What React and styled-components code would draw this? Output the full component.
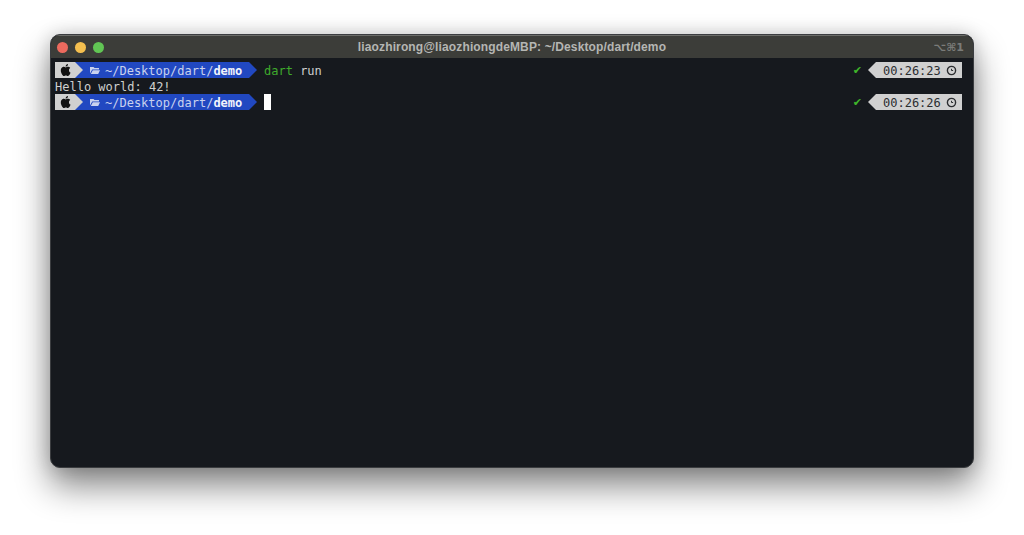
import styled, { createGlobalStyle } from "styled-components";

const Global = createGlobalStyle`
  html, body {
    margin: 0;
    background: #fff;
    overflow: hidden;
  }
`;

const Page = styled.div`
  width: 1024px;
  height: 535px;
  padding: 34px 50px 0;
  box-sizing: border-box;
`;

const Window = styled.div`
  width: 924px;
  height: 434px;
  border-radius: 10px;
  border: 1px solid #3b3d40;
  box-sizing: border-box;
  background: #16191e;
  box-shadow: 0 18px 34px rgba(0, 0, 0, 0.48), 0 0 18px rgba(0, 0, 0, 0.16);
  overflow: hidden;
  display: flex;
  flex-direction: column;
`;

const TitleBar = styled.div`
  height: 23px;
  flex: none;
  background: #3c3d39;
  border-top: 1px solid #6b6c68;
  box-sizing: border-box;
  display: grid;
  grid-template-columns: 100px 1fr 100px;
  align-items: center;
  padding: 0 9px 0 6px;
`;

const Lights = styled.div`
  display: flex;
  gap: 7px;
`;

const Light = styled.span`
  width: 11px;
  height: 11px;
  border-radius: 50%;
  background: ${(p) => p.$color};
`;

const Title = styled.div`
  text-align: center;
  padding-left: 3px;
  font: bold 12px "Liberation Sans", Arial, sans-serif;
  letter-spacing: 0.13px;
  color: #b5b6b3;
`;

const Shortcut = styled.div`
  text-align: right;
  font: bold 11px "DejaVu Sans", sans-serif;
  color: #7a7b78;
  white-space: nowrap;
`;

const Terminal = styled.div`
  padding: 4px 11px 0 4px;
  font: 12px/16px "DejaVu Sans Mono", monospace;
  color: #cfd0cf;
`;

const Row = styled.div`
  height: 16px;
  display: flex;
  align-items: center;
  white-space: pre;
`;

const TextLine = styled.div`
  height: 16px;
  padding-top: 1px;
  box-sizing: border-box;
  white-space: pre;
`;

const AppleSeg = styled.div`
  width: 28px;
  height: 16px;
  margin-right: -8px;
  background: #d0d0d0;
  padding-left: 4px;
  box-sizing: border-box;
  display: flex;
  align-items: center;
  clip-path: polygon(0 0, 20px 0, 28px 50%, 20px 100%, 0 100%);
  position: relative;
  z-index: 1;
`;

const PathSeg = styled.div`
  width: 182px;
  height: 16px;
  flex: none;
  background: #2148c1;
  color: #c9d2ee;
  padding: 1px 0 0 15px;
  box-sizing: border-box;
  display: flex;
  align-items: center;
  clip-path: polygon(0 0, 174px 0, 182px 50%, 174px 100%, 0 100%);
  b {
    color: #f2f4fb;
    font-weight: bold;
  }
`;

const FolderIcon = styled.svg`
  width: 10px;
  height: 9px;
  margin-right: 5px;
  flex: none;
`;

const Command = styled.span`
  margin-left: 7px;
  padding-top: 1px;
`;

const Green = styled.span`
  color: #3fa92c;
`;

const Cursor = styled.span`
  width: 7px;
  height: 16px;
  margin-left: 7px;
  background: #fff;
`;

const Status = styled.div`
  margin-left: auto;
  display: flex;
  align-items: center;
`;

const Check = styled.span`
  color: #3fb52a;
  font: bold 11px "DejaVu Sans", sans-serif;
  padding-top: 1px;
  margin-right: 6px;
`;

const TimeSeg = styled.div`
  width: 94px;
  height: 16px;
  background: #d0d0d0;
  color: #2b2d30;
  box-sizing: border-box;
  padding: 1px 0 0 15px;
  display: flex;
  align-items: center;
  gap: 5px;
  clip-path: polygon(8px 0, 100% 0, 100% 100%, 8px 100%, 0 50%);
`;

const AppleLogo = () => (
  <svg width="14" height="14" viewBox="0 0 24 24" fill="#111">
    <path d="M17.05 12.54c-.03-2.6 2.12-3.85 2.22-3.91-1.21-1.77-3.09-2.01-3.76-2.04-1.6-.16-3.12.94-3.93.94-.81 0-2.06-.92-3.39-.89-1.74.03-3.35 1.01-4.25 2.57-1.81 3.14-.46 7.8 1.3 10.35.86 1.25 1.89 2.65 3.24 2.6 1.3-.05 1.79-.84 3.36-.84s2.01.84 3.39.81c1.4-.02 2.28-1.27 3.14-2.53.99-1.45 1.4-2.85 1.42-2.93-.03-.01-2.72-1.04-2.74-4.13zM14.47 4.9c.72-.87 1.2-2.08 1.07-3.28-1.03.04-2.28.69-3.02 1.55-.66.77-1.24 2-1.09 3.18 1.15.09 2.33-.58 3.04-1.45z" />
  </svg>
);

const Clock = () => (
  <svg width="11" height="11" viewBox="0 0 11 11" fill="none" stroke="#2b2d30">
    <circle cx="5.5" cy="5.5" r="4.1" strokeWidth="1.4" />
    <path d="M5.5 3.8v1.7h1.6" strokeWidth="1" />
  </svg>
);

const Prompt = () => (
  <>
    <AppleSeg>
      <AppleLogo />
    </AppleSeg>
    <PathSeg>
      <FolderIcon viewBox="0 0 10 9" fill="#c9d2ee">
        <path d="M0 1h3.5l1 1H9v1.5H2.2L0 7.5zM2.8 4.3H10L8.2 8H.8z" />
      </FolderIcon>
      ~/Desktop/dart/<b>demo</b>
    </PathSeg>
  </>
);

const RightStatus = ({ time }) => (
  <Status>
    <Check>✔</Check>
    <TimeSeg>
      {time}
      <Clock />
    </TimeSeg>
  </Status>
);

export default function App() {
  return (
    <Page>
      <Global />
      <Window>
        <TitleBar>
          <Lights>
            <Light $color="#ec6a5e" />
            <Light $color="#f4bf4f" />
            <Light $color="#61c554" />
          </Lights>
          <Title>liaozhirong@liaozhiongdeMBP: ~/Desktop/dart/demo</Title>
          <Shortcut>⌥⌘1</Shortcut>
        </TitleBar>
        <Terminal>
          <Row>
            <Prompt />
            <Command>
              <Green>dart</Green> run
            </Command>
            <RightStatus time="00:26:23" />
          </Row>
          <TextLine>Hello world: 42!</TextLine>
          <Row>
            <Prompt />
            <Cursor />
            <RightStatus time="00:26:26" />
          </Row>
        </Terminal>
      </Window>
    </Page>
  );
}
